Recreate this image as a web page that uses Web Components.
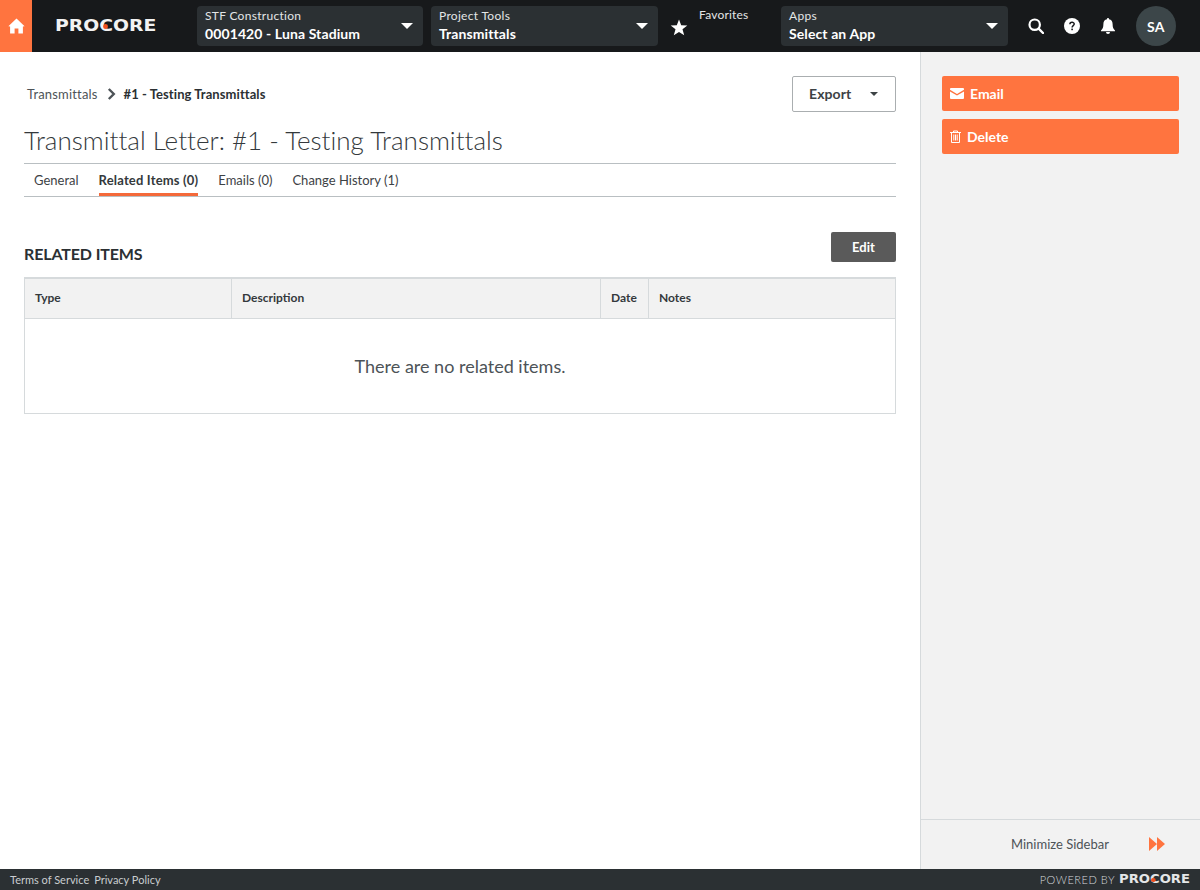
<!DOCTYPE html>
<html lang="en">
<head>
<meta charset="utf-8">
<title>Transmittal Letter</title>
<style>
    html, body { margin: 0; height: 100%; }
    body { font-family: Lato, "Liberation Sans", sans-serif; color: #2b3033; overflow: hidden; }
</style>
</head>
<body>
<app-shell>
    <top-bar slot="top">
        <nav-select slot="first" style="width:226px" label="STF Construction" value="0001420 - Luna Stadium"></nav-select>
        <nav-select slot="first" label="Project Tools" value="Transmittals"></nav-select>
        <nav-select slot="apps" label="Apps" value="Select an App"></nav-select>
    </top-bar>
    <main-panel slot="main">
        <tab-strip></tab-strip>
        <related-table></related-table>
    </main-panel>
    <side-bar slot="side"></side-bar>
    <foot-bar slot="foot"></foot-bar>
</app-shell>

<script>
const logoStyles = `
    .logo {
        position: relative;
        display: inline-block;
        font-family: "DejaVu Sans", sans-serif;
        font-weight: 700;
        color: #fff;
        line-height: 1;
        white-space: nowrap;
    }
    .logo i {
        position: absolute;
        border-radius: 50%;
        background: #f0501e;
    }
`;

class AppShell extends HTMLElement {
    connectedCallback() {
        this.attachShadow({ mode: 'open' });
        this.shadowRoot.innerHTML = `
            <style>
                :host { display: grid; grid-template-columns: 920px 280px; grid-template-rows: 52px 817px 21px; width: 1200px; height: 890px; }
                .top, .foot { grid-column: 1 / 3; display: block; }
            </style>
            <slot class="top" name="top"></slot>
            <slot name="main"></slot>
            <slot name="side"></slot>
            <slot class="foot" name="foot"></slot>
        `;
    }
}

class TopBar extends HTMLElement {
    connectedCallback() {
        this.attachShadow({ mode: 'open' });
        this.shadowRoot.innerHTML = `
            <style>
                :host { display: flex; align-items: center; height: 52px; background: #17191b; color: #fff; }
                ${logoStyles}
                .home { width: 32px; height: 52px; background: #ff743f; display: flex; align-items: center; justify-content: center; flex: none; }
                .brand { width: 165px; flex: none; padding-left: 23px; box-sizing: border-box; margin-bottom: 3px; }
                .logo { font-size: 16px; color: #f2f2f2; transform: scaleX(1.175); transform-origin: left center; }
                .logo i { width: 4.5px; height: 4.5px; left: 40.5px; top: 6px; }
                .group { display: flex; gap: 8px; flex: none; }
                .star { width: 42px; flex: none; display: flex; justify-content: center; margin-top: 2px; }
                .fav { width: 81px; flex: none; align-self: flex-start; font-size: 12px; letter-spacing: 0.2px; color: #e4e6e7; padding-top: 7px; line-height: 15px; box-sizing: border-box; margin-left: -1px; margin-right: 1px; }
                .icons { display: flex; align-items: center; margin-left: 10px; }
                .icons svg { display: block; }
                .ic { width: 36px; display: flex; justify-content: center; }
                .avatar { width: 40px; height: 40px; border-radius: 50%; background: #3c4649; display: flex; align-items: center; justify-content: center; font-size: 14px; font-weight: 700; margin-left: 10px; letter-spacing: .3px; }
            </style>
            <a class="home">
                <svg width="17" height="16" viewBox="0 0 17 16"><path fill="#fff" d="M8.5 0.5 L16.6 8.2 L14.9 8.6 V15.5 H10.4 V10.6 H6.6 V15.5 H2.1 V8.6 L0.4 8.2 Z"/></svg>
            </a>
            <div class="brand"><span class="logo">PROCORE<i></i></span></div>
            <div class="group"><slot name="first"></slot></div>
            <div class="star">
                <svg width="18" height="17" viewBox="0 0 18 17"><path fill="#fff" d="M9 0.5 L11.2 6.2 L17.3 6.5 L12.5 10.3 L14.2 16.2 L9 12.9 L3.8 16.2 L5.5 10.3 L0.7 6.5 L6.8 6.2 Z"/></svg>
            </div>
            <div class="fav">Favorites</div>
            <slot name="apps"></slot>
            <div class="icons">
                <div class="ic"><svg width="16" height="16" viewBox="0 0 16 16"><circle cx="6.7" cy="6.7" r="5.2" fill="none" stroke="#fff" stroke-width="2.2"/><path d="M10.6 10.6 L15 15" stroke="#fff" stroke-width="2.4" stroke-linecap="round"/></svg></div>
                <div class="ic"><svg width="16" height="16" viewBox="0 0 16 16"><circle cx="8" cy="8" r="8" fill="#fff"/><path d="M5.9 6.2 C5.9 3.7 10.2 3.7 10.2 6.1 C10.2 7.7 8.1 7.7 8.1 9.5" fill="none" stroke="#17191b" stroke-width="1.5"/><rect x="7.3" y="10.6" width="1.6" height="1.6" fill="#17191b"/></svg></div>
                <div class="ic"><svg width="14" height="16" viewBox="0 0 14 16"><path fill="#fff" d="M7 0 C7.7 0 8 .5 8 1.2 C10.4 1.7 11.6 3.4 11.6 6 C11.6 9.5 12.4 10.9 14 12.4 V13.2 H0 V12.4 C1.6 10.9 2.4 9.5 2.4 6 C2.4 3.4 3.6 1.7 6 1.2 C6 .5 6.3 0 7 0 Z"/><path fill="#fff" d="M5 14 H9 A2 2 0 0 1 5 14 Z"/></svg></div>
                <div class="avatar">SA</div>
            </div>
        `;
    }
}

class NavSelect extends HTMLElement {
    connectedCallback() {
        this.attachShadow({ mode: 'open' });
        this.shadowRoot.innerHTML = `
            <style>
                :host { display: block; flex: none; width: 227px; height: 40px; box-sizing: border-box; background: #2b3033; border-radius: 4px; padding: 2px 10px 0 8px; position: relative; color: #fff; }
                .text { margin-top: -4px; }
                .label { font-size: 12px; line-height: 16px; letter-spacing: 0.3px; color: #e4e6e7; }
                .value { font-size: 14px; line-height: 18px; font-weight: 700; letter-spacing: 0.1px; margin-top: 1px; }
                .row { display: flex; justify-content: space-between; align-items: center; height: 38px; }
                .caret { width: 0; height: 0; border-left: 6px solid transparent; border-right: 6px solid transparent; border-top: 6px solid #fff; margin-bottom: 2px; }
            </style>
            <div class="row">
                <div class="text">
                    <div class="label">${this.getAttribute('label')}</div>
                    <div class="value">${this.getAttribute('value')}</div>
                </div>
                <span class="caret"></span>
            </div>
        `;
    }
}

class MainPanel extends HTMLElement {
    connectedCallback() {
        this.attachShadow({ mode: 'open' });
        this.shadowRoot.innerHTML = `
            <style>
                :host { display: block; padding: 24px 24px 0; background: #fff; box-sizing: border-box; min-width: 0; }
                .crumbs { display: flex; align-items: center; justify-content: space-between; height: 36px; padding-left: 3px; }
                .path { display: flex; align-items: center; font-size: 13px; color: #4d5357; }
                .path span { letter-spacing: 0.17px; }
                .path svg { margin: 0 8px 0 9px; }
                .path b { color: #2b3033; font-weight: 700; letter-spacing: 0.07px; }
                .export { width: 104px; height: 36px; box-sizing: border-box; background: #fff; border: 1px solid #aaaeb0; border-radius: 2px; display: flex; align-items: center; padding: 0 0 2px 16px; font-size: 14px; font-weight: 700; letter-spacing: 0.1px; color: #3d4245; position: relative; }
                .export span { position: absolute; right: 17px; top: 15px; width: 0; height: 0; border-left: 4px solid transparent; border-right: 4px solid transparent; border-top: 4px solid #3d4245; }
                h1 { margin: 8px 0 0; font-size: 26px; line-height: 40px; height: 43px; font-weight: 300; color: #34393c; border-bottom: 1px solid #b9bfc2; letter-spacing: 0.005px; }
            </style>
            <div class="crumbs">
                <div class="path">
                    <span>Transmittals</span>
                    <svg width="9" height="12" viewBox="0 0 9 12"><path d="M1.8 1 L6.8 6 L1.8 11" fill="none" stroke="#4d5357" stroke-width="2.4"/></svg>
                    <b>#1 - Testing Transmittals</b>
                </div>
                <div class="export">Export<span></span></div>
            </div>
            <h1>Transmittal Letter: #1 - Testing Transmittals</h1>
            <slot></slot>
        `;
    }
}

class TabStrip extends HTMLElement {
    connectedCallback() {
        this.attachShadow({ mode: 'open' });
        this.shadowRoot.innerHTML = `
            <style>
                :host { display: flex; gap: 20px; height: 32px; padding-left: 10px; border-bottom: 1px solid #b9bfc2; font-size: 13px; color: #3d4245; }
                div { line-height: 32px; height: 32px; box-sizing: border-box; }
                div:first-child { letter-spacing: 0.15px; }
                .on { font-weight: 700; color: #34393c; border-bottom: 3px solid #f4693a; letter-spacing: 0.18px; }
            </style>
            <div>General</div>
            <div class="on">Related Items (0)</div>
            <div>Emails (0)</div>
            <div>Change History (1)</div>
        `;
    }
}

class RelatedTable extends HTMLElement {
    connectedCallback() {
        this.attachShadow({ mode: 'open' });
        this.shadowRoot.innerHTML = `
            <style>
                :host { display: block; }
                .head { display: flex; justify-content: space-between; align-items: flex-start; padding-top: 35px; height: 80px; box-sizing: border-box; }
                h2 { margin: 12px 0 0; font-size: 16px; line-height: 20px; font-weight: 700; color: #2b3033; letter-spacing: -0.12px; }
                .edit { width: 65px; height: 30px; background: #5a5a5a; color: #fff; border-radius: 2px; font-size: 13px; font-weight: 700; display: flex; align-items: center; justify-content: center; }
                .table { border: 1px solid #d6dadc; border-top-width: 2px; height: 137px; box-sizing: border-box; }
                .row { display: grid; grid-template-columns: 206px 369px 48px 1fr; height: 39px; box-sizing: content-box; background: #f2f2f2; border-bottom: 1px solid #d6dadc; font-size: 12px; font-weight: 700; color: #34393c; }
                .row div { padding-left: 10px; line-height: 38px; border-left: 1px solid #d6dadc; }
                .row div:first-child { border-left: 0; }
                .empty { text-align: center; font-size: 18px; line-height: 24px; color: #4d5357; padding-top: 35px; }
            </style>
            <div class="head">
                <h2>RELATED ITEMS</h2>
                <div class="edit">Edit</div>
            </div>
            <div class="table">
                <div class="row">
                    <div>Type</div><div>Description</div><div>Date</div><div>Notes</div>
                </div>
                <div class="empty">There are no related items.</div>
            </div>
        `;
    }
}

class SideBar extends HTMLElement {
    connectedCallback() {
        this.attachShadow({ mode: 'open' });
        this.shadowRoot.innerHTML = `
            <style>
                :host { display: flex; flex-direction: column; background: #f2f2f2; border-left: 1px solid #d6dadc; box-sizing: border-box; }
                .actions { flex: 1; padding: 24px 21px 0 21px; display: flex; flex-direction: column; gap: 8px; }
                .btn { height: 35px; background: #ff743f; border-radius: 2px; color: #fff; font-size: 14px; font-weight: 700; display: flex; align-items: center; padding-left: 8px; gap: 6px; }
                .min { height: 50px; border-top: 1px solid #d6dadc; display: flex; align-items: center; font-size: 13px; color: #4d5357; padding: 0 0 2px 90px; box-sizing: border-box; }
                .min svg { margin-left: 40px; }
            </style>
            <div class="actions">
                <div class="btn">
                    <svg width="14" height="11" viewBox="0 0 14 11"><path fill="#fff" d="M1 0 H13 A1 1 0 0 1 14 1 V1.8 L7 6 L0 1.8 V1 A1 1 0 0 1 1 0 Z M0 3.4 L7 7.6 L14 3.4 V10 A1 1 0 0 1 13 11 H1 A1 1 0 0 1 0 10 Z"/></svg>
                    <span>Email</span>
                </div>
                <div class="btn">
                    <svg width="11" height="13" viewBox="0 0 11 13"><path fill="none" stroke="#fff" d="M0 2.5 H11 M3.5 2.5 V1 H7.5 V2.5 M1.5 2.5 V12.5 H9.5 V2.5 M3.8 4.5 V10.5 M5.5 4.5 V10.5 M7.2 4.5 V10.5"/></svg>
                    <span>Delete</span>
                </div>
            </div>
            <div class="min">
                <span>Minimize Sidebar</span>
                <svg width="16" height="14" viewBox="0 0 16 14"><path fill="#ff743f" d="M0 0 L8 7 L0 14 Z M8 0 L16 7 L8 14 Z"/></svg>
            </div>
        `;
    }
}

class FootBar extends HTMLElement {
    connectedCallback() {
        this.attachShadow({ mode: 'open' });
        this.shadowRoot.innerHTML = `
            <style>
                :host { display: flex; align-items: center; justify-content: space-between; height: 21px; background: #2b3033; padding: 0 10px; box-sizing: border-box; font-size: 11px; color: #c9cdcf; }
                ${logoStyles}
                .links { display: flex; gap: 5px; }
                .pow { display: flex; align-items: center; gap: 13px; font-weight: 300; letter-spacing: .5px; color: #d6dadc; }
                .logo { font-size: 11.5px; letter-spacing: 0; margin-top: 1px; transform-origin: right center; transform: scaleX(1.145); color: #e4e6e7; }
                .logo i { width: 3.5px; height: 3.5px; left: 28px; top: 4.2px; }
            </style>
            <div class="links"><span>Terms of Service</span><span>Privacy Policy</span></div>
            <div class="pow"><span>POWERED BY</span><span class="logo">PROCORE<i></i></span></div>
        `;
    }
}

customElements.define('app-shell', AppShell);
customElements.define('top-bar', TopBar);
customElements.define('nav-select', NavSelect);
customElements.define('main-panel', MainPanel);
customElements.define('tab-strip', TabStrip);
customElements.define('related-table', RelatedTable);
customElements.define('side-bar', SideBar);
customElements.define('foot-bar', FootBar);
</script>
</body>
</html>
